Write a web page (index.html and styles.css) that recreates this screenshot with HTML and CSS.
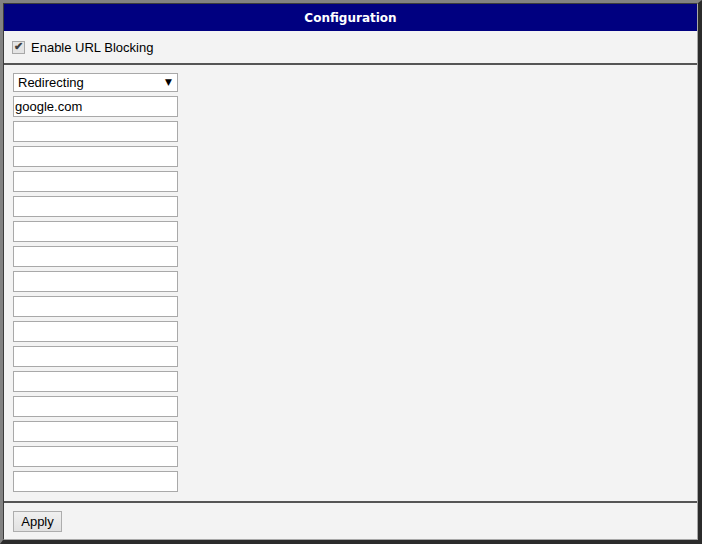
FILE: index.html
```html
<!DOCTYPE html>
<html lang="en">
<head>
    <meta charset="UTF-8">
    <title>Configuration</title>
    <link rel="stylesheet" href="styles.css">
</head>
<body>
    <div class="frame">
        <div class="panel">
            <div class="panel-header">Configuration</div>

            <div class="panel-row enable-row">
                <label class="check-label">
                    <input type="checkbox" class="check" checked>
                    Enable URL Blocking
                </label>
            </div>

            <div class="panel-row url-list">
                <span class="select-wrap">
                    <select class="mode-select">
                        <option>Redirecting</option>
                        <option>Blocking</option>
                    </select>
                    <span class="select-arrow">&#9660;</span>
                </span>
                <input type="text" class="url-input" value="google.com">
                <input type="text" class="url-input">
                <input type="text" class="url-input">
                <input type="text" class="url-input">
                <input type="text" class="url-input">
                <input type="text" class="url-input">
                <input type="text" class="url-input">
                <input type="text" class="url-input">
                <input type="text" class="url-input">
                <input type="text" class="url-input">
                <input type="text" class="url-input">
                <input type="text" class="url-input">
                <input type="text" class="url-input">
                <input type="text" class="url-input">
                <input type="text" class="url-input">
                <input type="text" class="url-input">
            </div>

            <div class="panel-row button-row">
                <button class="btn">Apply</button>
            </div>
        </div>
    </div>
</body>
</html>
```

FILE: styles.css
```css
:root {
    --navy: #000080;
    --panel-bg: #f3f3f3;
    --sep: #555555;
    --field-border: #a9a9a9;
}

html, body {
    margin: 0;
    padding: 0;
}

body {
    font-family: 'Liberation Sans', Arial, sans-serif;
    font-size: 13px;
    color: #000;
    background: #fff;
}

.frame {
    width: 702px;
    height: 544px;
    box-sizing: border-box;
    border-style: solid;
    border-width: 3px 4px 4px 3px;
    border-color: #828282 #2b2b2b #2b2b2b #828282;
}

.panel {
    height: 100%;
    box-sizing: border-box;
    display: flex;
    flex-direction: column;
    background: var(--panel-bg);
    border-style: solid;
    border-width: 1px;
    border-color: #3c3c3c #a8a8a8 #a8a8a8 #3c3c3c;
}

.panel-header {
    height: 27px;
    flex: none;
    display: flex;
    align-items: center;
    justify-content: center;
    background: var(--navy);
    color: #fff;
    font-family: 'DejaVu Sans', Verdana, sans-serif;
    font-weight: bold;
    font-size: 12px;
}

.panel-row {
    flex: none;
}

.enable-row {
    height: 32px;
    display: flex;
    align-items: center;
    padding-left: 8px;
    border-bottom: 2px solid var(--sep);
}

.check-label {
    display: flex;
    align-items: center;
    gap: 6px;
}

.check {
    appearance: none;
    -webkit-appearance: none;
    width: 13px;
    height: 13px;
    margin: 0;
    box-sizing: border-box;
    border: 1px solid #a8a8a8;
    background: #e4e4e4;
    position: relative;
}

.check:checked::after {
    content: '\2714';
    position: absolute;
    left: 1px;
    top: -2px;
    font-size: 11px;
    font-weight: bold;
    color: #404040;
}

.url-list {
    flex: 1;
    display: flex;
    flex-direction: column;
    align-items: flex-start;
    gap: 4px;
    padding: 8px 0 0 9px;
    border-bottom: 2px solid var(--sep);
}

.select-wrap {
    position: relative;
    display: block;
}

.mode-select {
    appearance: none;
    -webkit-appearance: none;
    width: 165px;
    height: 19px;
    margin: 0;
    padding: 0 0 0 4px;
    box-sizing: border-box;
    border: 1px solid var(--field-border);
    border-radius: 0;
    background: #fff;
    font-family: 'Liberation Sans', Arial, sans-serif;
    font-size: 13px;
    color: #000;
}

.select-arrow {
    position: absolute;
    right: 6px;
    top: 4px;
    font-family: 'DejaVu Sans', sans-serif;
    font-size: 9px;
    line-height: 10px;
    pointer-events: none;
}

.url-input {
    width: 165px;
    height: 21px;
    margin: 0;
    padding: 0 1px;
    box-sizing: border-box;
    border: 1px solid var(--field-border);
    background: #fff;
    font-family: 'Liberation Sans', Arial, sans-serif;
    font-size: 13px;
    color: #000;
}

.button-row {
    flex: none;
    height: 36px;
    display: flex;
    align-items: center;
    padding-left: 9px;
}

.btn {
    width: 49px;
    height: 21px;
    margin-top: 1px;
    padding: 0;
    border: 1px solid #adadad;
    border-radius: 0;
    background: linear-gradient(#f0f0f0, #e1e1e1);
    font-family: 'Liberation Sans', Arial, sans-serif;
    font-size: 13px;
    color: #000;
}
```
